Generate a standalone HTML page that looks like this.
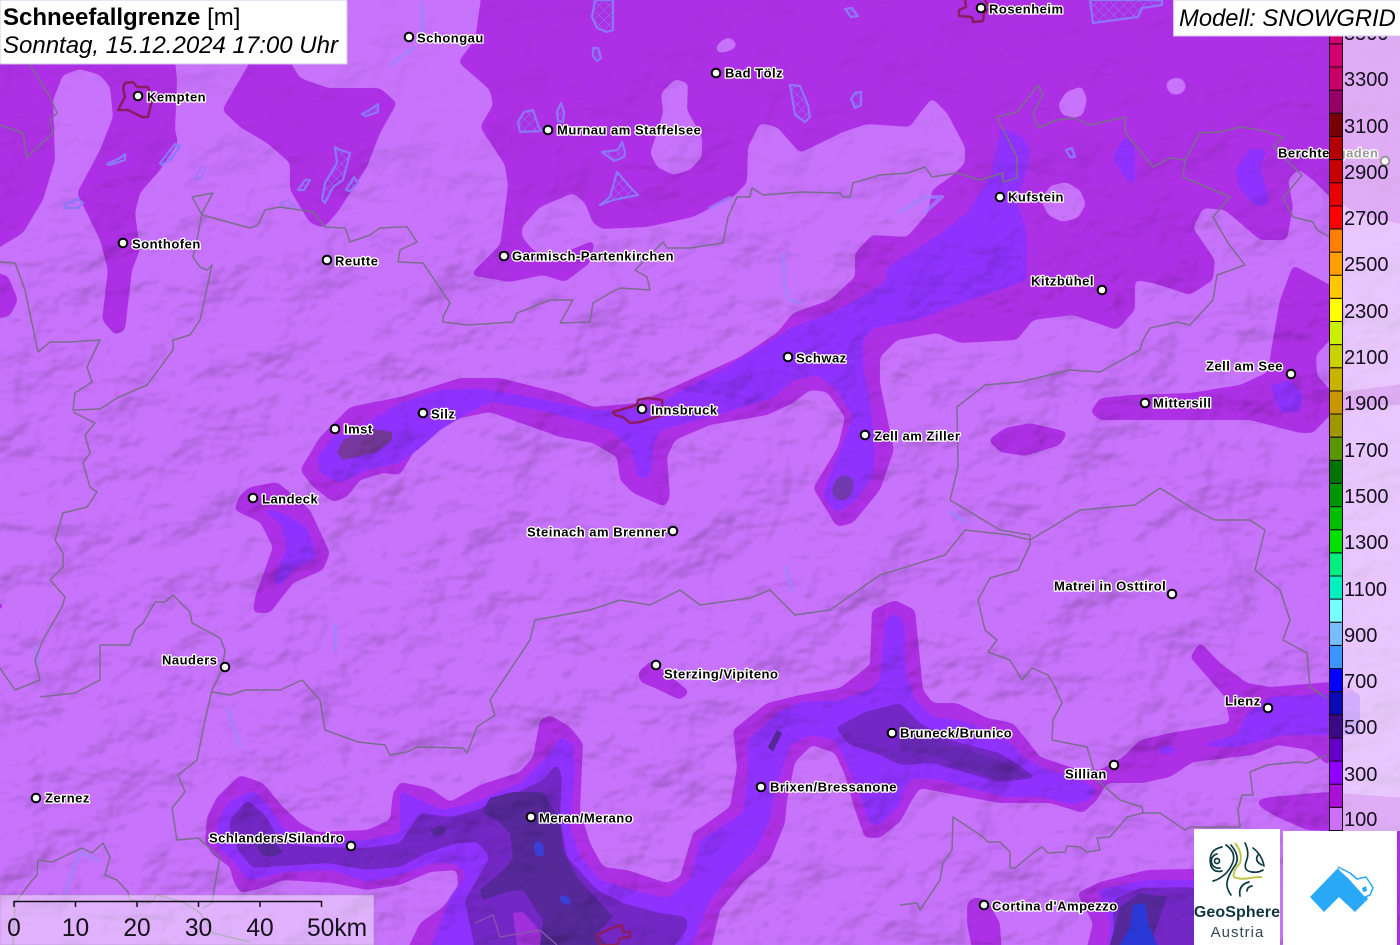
<!DOCTYPE html>
<html><head><meta charset="utf-8"><title>Schneefallgrenze</title>
<style>
html,body{margin:0;padding:0;background:#c56ffa}
#w{position:relative;width:1400px;height:945px;overflow:hidden;font-family:"Liberation Sans",sans-serif}
svg{position:absolute;left:0;top:0}
.c text{font:bold 13px "Liberation Sans",sans-serif;letter-spacing:.5px;fill:#000;stroke:#fff;stroke-width:2.6px;paint-order:stroke;stroke-linejoin:round;dominant-baseline:central}
.c circle{fill:#fff;stroke:#000;stroke-width:2}
.b{fill:none;stroke:#7a6e8c;stroke-width:1.5;stroke-linejoin:round}
.l{stroke:#8c78f6;stroke-width:2.2;fill:url(#h);stroke-linejoin:round}
.r{fill:none;stroke:#a082fc;stroke-width:4;stroke-linecap:round;stroke-linejoin:round;opacity:.75}
.k{fill:none;stroke:#8a1c62;stroke-width:2.5;stroke-linejoin:round}
.g text{font:20px "Liberation Sans",sans-serif;fill:#14101c;dominant-baseline:central}
</style></head><body><div id="w">
<svg width="1400" height="945" viewBox="0 0 1400 945">
<defs>
<pattern id="h" width="7" height="7" patternUnits="userSpaceOnUse" patternTransform="rotate(45)"><path d="M0 0H7M0 0V7" stroke="#8c78f6" stroke-width="1" fill="none"/></pattern>
<filter id="hs" x="0" y="0" width="100%" height="100%" color-interpolation-filters="sRGB">
<feTurbulence type="fractalNoise" baseFrequency=".013 .018" numOctaves="4" seed="11"/>
<feDiffuseLighting surfaceScale="11" diffuseConstant="1.2" lighting-color="#fff"><feDistantLight azimuth="225" elevation="58"/></feDiffuseLighting>
<feGaussianBlur stdDeviation=".8"/>
<feComponentTransfer><feFuncR type="linear" slope=".34" intercept=".66"/><feFuncG type="linear" slope=".34" intercept=".66"/><feFuncB type="linear" slope=".34" intercept=".66"/></feComponentTransfer>
</filter>
<filter id="rnd" filterUnits="userSpaceOnUse" x="-20" y="-20" width="1440" height="985" color-interpolation-filters="sRGB">
<feGaussianBlur stdDeviation="3"/>
<feComponentTransfer><feFuncA type="linear" slope="12" intercept="-5.5"/></feComponentTransfer>
</filter>
<linearGradient id="mg" x1="0" y1="0" x2="0" y2="1"><stop offset="0" stop-color="#fff" stop-opacity=".25"/><stop offset=".14" stop-color="#fff" stop-opacity=".45"/><stop offset=".32" stop-color="#fff" stop-opacity="1"/><stop offset="1" stop-color="#fff" stop-opacity="1"/></linearGradient>
<mask id="m" maskUnits="userSpaceOnUse" x="0" y="0" width="1400" height="945"><rect width="1400" height="945" fill="url(#mg)"/></mask>
</defs>
<rect width="1400" height="945" fill="#c873fc"/>

<!-- magenta band -->
<g fill="#ae30e6" fill-rule="evenodd" filter="url(#rnd)">
<path d="M485 -30L475 40 458 62 490 90 493 105 480 127 505 165 508 185 503 225 500 245 470 275 510 282 543 275 565 282 590 263 595 240 570 250 550 258 533 250 522 237 522 227 540 207 573 193 585 203 593 223 602 229 647 227 693 217 733 197 747 183 748 147 760 123 777 127 800 153 843 132 867 124 910 127 920 113 932 98 947 113 965 147 965 163 953 175 932 190 928 213 907 237 872 235 855 253 855 277 830 300 793 313 777 333 740 357 660 393 637 403 593 407 560 393 500 378 460 378 400 397 350 407 320 437 300 470 313 487 333 502 347 497 360 480 383 473 400 475 415 450 450 420 490 412 560 437 593 443 617 457 620 480 633 493 665 507 670 497 667 457 675 440 710 425 767 415 793 403 810 390 827 392 845 417 838 447 813 488 837 527 853 523 880 490 894 450 880 383 880 357 897 340 937 333 960 343 1017 340 1033 320 1073 315 1117 330 1135 310 1135 280 1153 283 1190 295 1213 280 1215 260 1193 228 1203 208 1225 210 1260 240 1287 240 1293 207 1288 180 1298 169 1313 180 1330 197 1360 215 1430 230 1430 -30Z
M715 48L722 40 730 37 738 45 730 51 718 53Z
M675 79L688 83 687 110 702 137 702 157 690 170 673 175 657 167 650 153 657 133 663 113 661 93Z
M1058 105L1066 92 1082 86 1087 100 1083 115 1075 118 1062 115Z
M1165 84L1172 78 1182 78 1187 87 1180 95 1170 94Z
M1041 200L1050 186 1066 182 1080 190 1086 204 1078 218 1062 222 1048 215Z"/>
<path d="M-30 40H173L177 80 175 130 178 143 160 170 140 193 135 213 140 250 132 270 125 330 115 335 102 320 108 270 100 240 77 193 100 150 113 117 110 87 100 75 80 69 63 75 53 100 55 160 43 200 23 233 -30 265Z"/>
<path d="M-30 265L8 276 18 300 10 316 -30 325Z"/>
<path d="M-30 590L7 606 -30 622Z"/>
<path d="M222 110L257 50 283 50 300 78 328 88 380 88 397 103 380 133 367 167 337 213 323 228 310 223 290 190 290 163 267 143 240 127Z"/>
<path d="M234 510L240 495 250 487 277 482 287 490 310 510 330 553 323 570 293 583 270 613 253 613 255 597 273 547 260 522Z"/>
<path d="M1330 285L1293 265 1280 300 1272 345 1268 372 1240 385 1190 393 1130 395 1100 398 1090 412 1100 420 1180 420 1250 420 1300 433 1313 433 1330 415 1380 405 1430 405 1430 380 1345 392 1330 390 1317 375 1316 355 1330 340 1345 325 1343 297Z"/>
<path d="M988 440L1005 428 1030 423 1068 432 1060 445 1025 456 1000 452Z"/>
<path d="M638 672L652 660 665 672 690 692 680 700 655 688 640 682Z"/>
<path d="M240 775L263 783 283 807 300 823 317 832 367 830 390 820 393 793 400 782 430 788 450 802 480 785 520 772 533 757 540 720 550 715 570 727 583 743 580 810 590 843 603 867 627 870 667 883 680 877 693 833 730 807 737 767 733 730 767 703 800 695 840 688 870 665 872 610 895 600 915 610 918 640 923 690 933 703 957 703 987 718 1013 723 1027 740 1040 757 1073 768 1100 770 1123 757 1140 740 1170 733 1230 723 1225 697 1190 657 1200 642 1220 663 1247 683 1270 687 1330 682 1355 690 1358 705 1345 730 1330 745 1330 767 1310 750 1277 745 1253 755 1193 762 1170 777 1143 783 1107 783 1097 800 1083 813 1050 803 1000 803 967 797 920 788 912 800 900 822 880 838 865 838 855 810 845 775 835 753 812 745 795 762 787 800 785 823 770 860 745 880 720 910 705 975 395 975 420 923 443 907 458 887 457 870 430 872 400 885 367 890 333 883 283 880 263 888 240 893 233 880 230 867 213 855 205 843 207 817 217 797Z"/>
<path d="M1257 800L1270 797 1327 792 1430 800 1430 835 1307 830 1277 817 1260 807Z"/>
<path d="M967 903L975 897 987 900 1000 923 1003 975 977 975 967 923Z"/>
<path d="M1077 893L1100 882 1147 870 1230 868V975H1080L1093 923Z"/>
<path d="M1385 820H1430V975H1385Z"/>
</g>

<!-- violet band -->
<g fill="#9032ff" filter="url(#rnd)">
<path d="M1000 127L1023 137 1030 150 1027 170 1017 200 1027 233 1027 280 1000 290 950 307 917 320 873 328 863 340 863 367 870 400 875 450 873 477 853 503 837 513 823 497 827 483 843 443 853 417 837 390 817 375 793 380 773 398 727 412 660 430 653 447 652 467 647 480 638 477 630 447 610 430 577 420 540 410 490 402 470 412 440 430 420 448 400 463 367 470 340 483 320 473 317 457 333 437 367 423 400 403 440 390 480 388 520 395 560 403 593 410 613 410 653 407 677 393 727 367 767 343 793 327 833 312 857 300 887 280 887 267 927 243 967 213 990 177 998 143Z"/>
<path d="M257 507L283 513 307 527 317 557 293 570 280 587 273 580 287 547 280 523Z"/>
<path d="M1250 148L1267 150 1260 167 1270 203 1257 207 1240 190 1235 170Z"/>
<path d="M1113 157L1125 135 1135 147 1135 180 1130 185 1120 170Z"/>
<path d="M1270 385L1290 380 1303 395 1300 412 1280 412Z"/>
<ellipse cx="1167" cy="750" rx="9" ry="5"/>
<path d="M253 790L270 807 283 828 317 840 367 840 400 833 400 790 420 800 443 810 473 803 520 783 547 757 560 737 573 743 575 773 570 827 580 857 600 880 633 890 667 898 690 880 700 840 743 813 748 777 748 740 777 713 800 702 840 700 870 690 880 680 885 620 897 612 905 625 905 670 915 700 933 717 960 720 987 730 1010 742 1023 757 1043 768 1080 780 1097 788 1090 800 1073 805 1043 797 1007 797 967 788 943 780 913 778 905 788 900 805 880 825 870 825 858 790 845 760 835 740 810 735 790 745 775 790 770 820 755 850 735 870 710 900 680 975 420 975 450 897 467 873 453 863 433 863 400 875 367 882 333 870 283 872 263 878 247 880 233 860 217 847 217 823 227 803Z"/>
<path d="M1247 713L1270 697 1360 692 1360 735 1283 735 1237 747 1207 747 1205 743 1237 735Z"/>
<path d="M1097 890L1145 880 1230 880V975H1108L1110 920Z"/>
</g>

<!-- darker bands -->
<g fill="#7328c6" filter="url(#rnd)">
<path d="M230 820L247 800 267 817 280 843 317 847 367 848 400 843 420 813 450 817 477 810 507 797 543 780 557 763 562 777 560 817 567 857 597 890 623 903 660 913 687 917 687 930 650 975 480 975 465 900 490 857 477 842 457 843 427 853 400 867 367 870 327 863 253 868 240 853 230 833Z"/>
<path d="M835 728L865 712 900 703 920 723 950 740 1000 753 1038 778 997 782 933 763 900 765 880 755 850 745Z"/>
<path d="M1113 900L1140 888 1187 887 1230 893V975H1115Z"/>
</g>
<path d="M513 913L523 912 537 927 547 945 517 945Z" fill="#a030dc"/>
<g fill="#56289a">
<path d="M482 812L490 798 513 792 543 792 560 820 563 850 577 877 613 917 597 933 607 945 540 945 543 920 523 890 507 892 483 900 480 890 507 867 513 857 510 833 497 820Z"/>
<path d="M1120 907L1140 893 1167 897 1160 917 1150 945 1110 945Z"/>
<path d="M430 829L440 826 447 829 444 834 434 836Z"/>
<path d="M768 747L777 730 782 733 773 752Z"/>
<path d="M257 847L263 838 273 841 283 852 273 857 262 855Z"/>
<path d="M900 720L950 745 1000 760 1030 776 997 780 933 755 900 750Z" opacity=".45"/>
</g>
<path d="M337 453L343 440 367 428 392 432 392 440 377 452 343 460Z" fill="#77399e"/>
<ellipse cx="843" cy="488" rx="10" ry="13" transform="rotate(25 843 488)" fill="#723ab0"/>
<ellipse cx="539" cy="849" rx="5" ry="8" transform="rotate(-15 539 849)" fill="#3a3fd8"/>
<ellipse cx="565" cy="900" rx="6" ry="4" transform="rotate(35 565 900)" fill="#3a3fd8"/>
<path d="M1133 905L1145 903 1148 923 1157 945H1120L1130 927Z" fill="#2a38d8"/>

<!-- hillshade -->
<g mask="url(#m)" style="mix-blend-mode:multiply"><rect width="1400" height="945" filter="url(#hs)"/></g>

<!-- rivers and lakes -->
<path class="r" d="M422 3V32M413 48L400 58 392 64M783 255L785 290 790 300 800 303M335 625V650M228 710L240 745M786 568L792 590M950 512L966 522M80 852L65 893M80 852L98 860M900 212L925 197 942 197 925 212M710 208L730 198M35 648L38 665"/>
<g>
<path class="l" d="M595 0H613V30L607 32 597 28 592 17Z"/>
<path class="l" d="M593 48L598 48 601 58 597 61 593 56Z"/>
<path class="l" d="M518 122L524 112 533 110 538 125 541 131 520 132Z"/>
<path class="l" d="M561 103L564 112 563 122 558 121 557 112Z"/>
<path class="l" d="M602 152L618 150 622 142 625 152 624 157 614 161Z"/>
<path class="l" d="M600 205L610 197 617 172 630 187 638 195 613 200Z"/>
<path class="l" d="M790 85L800 86 808 105 810 117 805 122 795 115Z"/>
<path class="l" d="M851 99L855 93 861 92 861 105 855 108Z"/>
<path class="l" d="M845 9L852 8 858 16 851 17Z"/>
<path class="l" d="M1090 0H1162V5L1142 8 1138 17 1100 22 1093 23Z"/>
<path class="l" d="M1066 150L1072 148 1075 157 1070 157Z"/>
<path class="l" d="M322 200L325 183 337 163 335 147 340 150 350 153 343 180 333 187 325 203Z"/>
<path class="l" d="M298 190L305 180 310 180 304 190Z"/>
<path class="l" d="M346 190L354 177 358 183 350 191Z"/>
<path class="l" d="M362 114L370 110 378 104 378 112 366 116Z"/>
<path class="l" d="M107 164L120 158 125 154 125 160 110 165Z"/>
<path class="l" d="M160 163L175 144 180 146 172 158 162 165Z"/>
<path class="l" d="M64 205L78 199 83 203 78 208 66 208Z"/>
<path class="l" d="M195 178L202 166 205 170 199 180Z" stroke-opacity=".5"/>
<path class="l" d="M280 203L288 200 295 206 285 209Z" stroke-opacity=".5"/>
</g>

<!-- borders -->
<g class="b">
<path d="M30 65L50 97 57 113 50 120 53 133 27 157 23 133 0 125"/>
<path d="M0 262L15 263 25 290 38 352 50 342 70 342 100 340 87 367 92 382 75 393 73 410 100 409 117 398 147 385 173 350 173 340 190 335 200 320 212 265 207 270 200 267 193 257 197 240 202 213 213 193 192 197 202 215 250 228 258 225 265 210 280 207 313 212 325 227 345 228 350 242 370 235 380 228 400 227 407 227 417 242 400 250 398 262 423 263 450 303 443 317 443 322 467 325 513 322 517 313 550 300 573 300 560 323 590 322 593 303 610 293 620 288 650 290 647 277 635 270 663 242 667 248 690 248 723 243 728 217 737 197 750 197 752 188 763 195 800 192 840 193 843 197 850 197 853 183 880 175 908 173 925 167 932 177 957 173 980 180 1003 173 1003 182 1017 178 1017 157 997 117 1017 112 1038 85 1043 95 1033 113 1038 128 1057 120 1075 118 1090 125 1125 117 1125 132 1153 167 1170 158 1185 160 1183 177 1230 197 1213 217 1228 243 1245 265 1217 275 1213 300 1190 325 1177 322 1150 328 1143 340 1140 350 1100 372 1070 370 1020 382 985 385 957 407 958 467 950 500 975 515 1000 530 1030 535 1030 545 1018 570 990 578 978 600 985 630 997 640 988 652 1010 660 1022 680 1032 668 1048 675 1055 687 1062 703 1053 720 1052 740 1087 747 1097 780 1120 800 1142 807 1143 813 1160 813 1185 830 1190 827 1240 827 1238 810 1242 795 1253 795 1250 772 1267 765 1297 762 1307 763 1327 755"/>
<path d="M1185 160L1200 133 1220 132 1240 127 1260 130 1283 137 1273 147 1302 175 1283 198 1293 217 1313 222 1317 230 1330 237"/>
<path d="M73 412L95 423 85 435 90 453 83 463 90 487 97 492 87 507 63 513 55 540 63 553 63 567 50 580 65 597 62 607 43 640 35 660 40 680 15 690 0 668M40 697L75 693 100 680 100 645 130 645 135 630 143 623 155 602 165 602 173 595 190 612 192 623 220 638 225 650 222 670 212 690 205 720 197 760 178 775 185 792 172 808 177 840 198 838 220 857 217 873 212 903 203 908"/>
<path d="M212 692L230 695 245 690 280 690 302 680 320 700 325 730 358 742 385 745 390 755 407 752 417 747 463 748 467 753 477 727 495 715 490 700 530 640 535 620 590 610 620 600 650 605 680 590 700 605 750 598 770 590 795 615 830 610 880 575 945 555 965 530 1010 535 1030 540 1080 510 1135 505 1160 488 1195 510 1215 520 1250 520 1265 530 1255 570 1280 590 1290 620 1283 640 1307 653 1310 687 1327 698"/>
<path d="M900 905L917 903 920 910 940 880 943 863 952 850 953 817 983 837 988 842 1000 842 1010 852 1010 868 1015 868 1033 853 1042 847 1048 853 1065 852 1067 846 1080 847 1087 852 1100 850 1097 838 1110 837 1127 817 1143 813"/>
<path d="M38 860L52 862 82 848 92 853 103 843 110 857 105 875 117 880 128 892 130 900 150 903 157 895 183 902 200 913 213 933 250 942M38 860L37 875 30 883 15 903 13 945"/>
<path d="M475 923L493 915 500 937 540 930 557 945" stroke="#8a5aa8" stroke-width="1.2"/>
</g>

<!-- city outlines -->
<path class="k" d="M125 83L133 82 137 87 148 87 152 100 148 117 142 117 128 110 118 110 125 97 123 88Z"/>
<path class="k" d="M613 412L637 405 638 400 648 398 662 400 663 415 640 422 630 423 623 417 615 415Z"/>
<path class="k" d="M965 0L966 7 959 10 959 16 972 17 973 22 983 21 984 13 990 8 985 0"/>
<path class="k" d="M597 935L612 928 622 925 623 932 630 932 630 937 620 938 617 945 600 945Z"/>

<!-- cities -->
<g class="c">
<circle cx="409" cy="37" r="4.3"/><text x="417" y="38">Schongau</text>
<circle cx="138" cy="96" r="4.3"/><text x="147" y="97">Kempten</text>
<circle cx="716" cy="73" r="4.3"/><text x="725" y="73">Bad Tölz</text>
<circle cx="548" cy="130" r="4.3"/><text x="557" y="130">Murnau am Staffelsee</text>
<circle cx="981" cy="8" r="4.3"/><text x="989" y="9">Rosenheim</text>
<circle cx="1385" cy="161" r="4.3"/><text x="1278" y="153">Berchtesgaden</text>
<circle cx="123" cy="243" r="4.3"/><text x="132" y="244">Sonthofen</text>
<circle cx="327" cy="260" r="4.3"/><text x="335" y="261">Reutte</text>
<circle cx="504" cy="256" r="4.3"/><text x="512" y="256">Garmisch-Partenkirchen</text>
<circle cx="1000" cy="197" r="4.3"/><text x="1008" y="197">Kufstein</text>
<circle cx="1102" cy="290" r="4.3"/><text x="1031" y="281">Kitzbühel</text>
<circle cx="788" cy="357" r="4.3"/><text x="796" y="358">Schwaz</text>
<circle cx="1291" cy="374" r="4.3"/><text x="1206" y="366">Zell am See</text>
<circle cx="1145" cy="403" r="4.3"/><text x="1153" y="403">Mittersill</text>
<circle cx="642" cy="409" r="4.3"/><text x="651" y="410">Innsbruck</text>
<circle cx="423" cy="413" r="4.3"/><text x="431" y="414">Silz</text>
<circle cx="335" cy="429" r="4.3"/><text x="344" y="429">Imst</text>
<circle cx="865" cy="435" r="4.3"/><text x="874" y="436">Zell am Ziller</text>
<circle cx="253" cy="498" r="4.3"/><text x="262" y="499">Landeck</text>
<circle cx="673" cy="531" r="4.3"/><text x="527" y="532">Steinach am Brenner</text>
<circle cx="1172" cy="594" r="4.3"/><text x="1054" y="586">Matrei in Osttirol</text>
<circle cx="225" cy="667" r="4.3"/><text x="162" y="660">Nauders</text>
<circle cx="656" cy="665" r="4.3"/><text x="664" y="674">Sterzing/Vipiteno</text>
<circle cx="1268" cy="708" r="4.3"/><text x="1225" y="701">Lienz</text>
<circle cx="892" cy="733" r="4.3"/><text x="900" y="733">Bruneck/Brunico</text>
<circle cx="1114" cy="765" r="4.3"/><text x="1065" y="774">Sillian</text>
<circle cx="761" cy="787" r="4.3"/><text x="770" y="787">Brixen/Bressanone</text>
<circle cx="531" cy="817" r="4.3"/><text x="539" y="818">Meran/Merano</text>
<circle cx="36" cy="798" r="4.3"/><text x="45" y="798">Zernez</text>
<circle cx="351" cy="846" r="4.3"/><text x="209" y="838">Schlanders/Silandro</text>
<circle cx="984" cy="905" r="4.3"/><text x="992" y="906">Cortina d'Ampezzo</text>
</g>

<!-- right strip overlay -->
<rect x="1330" y="36" width="70" height="795" fill="#fff" fill-opacity=".6"/>

<!-- legend -->
<g stroke="#1a0a1a" stroke-width="1">
<rect x="1329.5" y="807.4" width="13" height="23.1" fill="#cc70f5"/>
<rect x="1329.5" y="784.2" width="13" height="23.1" fill="#aa10d8"/>
<rect x="1329.5" y="761.1" width="13" height="23.1" fill="#9000ff"/>
<rect x="1329.5" y="737.9" width="13" height="23.1" fill="#6400c8"/>
<rect x="1329.5" y="714.8" width="13" height="23.1" fill="#3c0a82"/>
<rect x="1329.5" y="691.7" width="13" height="23.1" fill="#0a0ab4"/>
<rect x="1329.5" y="668.5" width="13" height="23.1" fill="#0000ff"/>
<rect x="1329.5" y="645.4" width="13" height="23.1" fill="#3c96ff"/>
<rect x="1329.5" y="622.3" width="13" height="23.1" fill="#78beff"/>
<rect x="1329.5" y="599.1" width="13" height="23.1" fill="#78ffff"/>
<rect x="1329.5" y="576" width="13" height="23.1" fill="#00f0c0"/>
<rect x="1329.5" y="552.9" width="13" height="23.1" fill="#00f080"/>
<rect x="1329.5" y="529.7" width="13" height="23.1" fill="#00e100"/>
<rect x="1329.5" y="506.6" width="13" height="23.1" fill="#00be00"/>
<rect x="1329.5" y="483.5" width="13" height="23.1" fill="#009600"/>
<rect x="1329.5" y="460.3" width="13" height="23.1" fill="#007300"/>
<rect x="1329.5" y="437.2" width="13" height="23.1" fill="#5a9600"/>
<rect x="1329.5" y="414" width="13" height="23.1" fill="#a09600"/>
<rect x="1329.5" y="390.9" width="13" height="23.1" fill="#c89600"/>
<rect x="1329.5" y="367.8" width="13" height="23.1" fill="#c8b400"/>
<rect x="1329.5" y="344.6" width="13" height="23.1" fill="#c8d200"/>
<rect x="1329.5" y="321.5" width="13" height="23.1" fill="#c8f000"/>
<rect x="1329.5" y="298.4" width="13" height="23.1" fill="#ffff00"/>
<rect x="1329.5" y="275.2" width="13" height="23.1" fill="#ffc800"/>
<rect x="1329.5" y="252.1" width="13" height="23.1" fill="#ffa000"/>
<rect x="1329.5" y="229" width="13" height="23.1" fill="#ff8000"/>
<rect x="1329.5" y="205.8" width="13" height="23.1" fill="#ff0000"/>
<rect x="1329.5" y="182.7" width="13" height="23.1" fill="#e60000"/>
<rect x="1329.5" y="159.6" width="13" height="23.1" fill="#c80000"/>
<rect x="1329.5" y="136.4" width="13" height="23.1" fill="#b40000"/>
<rect x="1329.5" y="113.3" width="13" height="23.1" fill="#780000"/>
<rect x="1329.5" y="90.1" width="13" height="23.1" fill="#960064"/>
<rect x="1329.5" y="67" width="13" height="23.1" fill="#c80064"/>
<rect x="1329.5" y="43.9" width="13" height="23.1" fill="#d2006e"/>
<rect x="1329.5" y="20.7" width="13" height="23.1" fill="#d2006e"/>
</g>
<g class="g">
<text x="1344" y="34">3500</text>
<text x="1344" y="80">3300</text>
<text x="1344" y="127">3100</text>
<text x="1344" y="173">2900</text>
<text x="1344" y="219">2700</text>
<text x="1344" y="265">2500</text>
<text x="1344" y="312">2300</text>
<text x="1344" y="358">2100</text>
<text x="1344" y="404">1900</text>
<text x="1344" y="451">1700</text>
<text x="1344" y="497">1500</text>
<text x="1344" y="543">1300</text>
<text x="1344" y="590">1100</text>
<text x="1344" y="636">900</text>
<text x="1344" y="682">700</text>
<text x="1344" y="728">500</text>
<text x="1344" y="775">300</text>
<text x="1344" y="820">100</text>
</g>

<!-- header boxes -->
<rect x="0" y="0" width="347" height="64" fill="#fff" stroke="#d8c0e8" stroke-width="1"/>
<text x="3" y="25" font-family="Liberation Sans" font-size="24" font-weight="bold" fill="#000">Schneefallgrenze <tspan font-weight="normal">[m]</tspan></text>
<text x="3" y="53" font-family="Liberation Sans" font-size="24" font-style="italic" fill="#000">Sonntag, 15.12.2024 17:00 Uhr</text>
<rect x="1173.5" y="0" width="227" height="36" fill="#fff" stroke="#d8c0e8" stroke-width="1"/>
<text x="1179" y="26" font-family="Liberation Sans" font-size="23.8" font-style="italic" fill="#000">Modell: SNOWGRID</text>

<!-- scale -->
<rect x="0" y="895" width="374" height="50" fill="#fff" fill-opacity=".45" stroke="#a080b0" stroke-opacity=".4"/>
<path d="M14 907V901.5H321.5V907M75.5 901.5V907M137 901.5V907M198.5 901.5V907M260 901.5V907" fill="none" stroke="#15101c" stroke-width="1.5"/>
<g font-family="Liberation Sans" font-size="24.6" fill="#15101c">
<text x="14" y="936" text-anchor="middle">0</text>
<text x="75.5" y="936" text-anchor="middle">10</text>
<text x="137" y="936" text-anchor="middle">20</text>
<text x="198.5" y="936" text-anchor="middle">30</text>
<text x="260" y="936" text-anchor="middle">40</text>
<text x="307" y="936">50km</text>
</g>

<!-- logos -->
<rect x="1194" y="829" width="86" height="116" fill="#fff"/>
<rect x="1283" y="831" width="114" height="114" fill="#fff"/>
<g fill="none" stroke="#0f3a43" stroke-width="1.7" stroke-linecap="round">
<circle cx="1217" cy="861" r="2.5"/>
<path d="M1217 854A7 7 0 1 0 1220 868"/>
<path d="M1222 847Q1207 850 1211 866 1214 873 1222 871"/>
<path d="M1226 845Q1236 852 1233 862 1230 870 1224 875 1218 880 1213 881"/>
<path d="M1231 845Q1240 856 1236 864 1226 878 1227 886 1228 891 1231 895"/>
<path d="M1245 843Q1250 853 1246 862 1243 871 1252 872 1258 873 1263 870"/>
<path d="M1253 848Q1262 855 1264 866"/>
<path d="M1258 855Q1254 861 1262 865"/>
<path d="M1240 896Q1238 885 1249 882"/>
<path d="M1247 891Q1247 887 1252 886"/>
</g>
<path d="M1235 843Q1243 853 1240 863 1232 872 1234 877 1240 880 1250 878 1258 877 1262 877" fill="none" stroke="#bcc64a" stroke-width="2"/>
<text x="1237" y="917" text-anchor="middle" font-family="Liberation Sans" font-size="16" font-weight="bold" letter-spacing=".1" fill="#12363f">GeoSphere</text>
<text x="1237.5" y="937" text-anchor="middle" font-family="Liberation Sans" font-size="15" letter-spacing="1" fill="#2d4a52">Austria</text>
<path d="M1310 897L1338 868 1340 871 1364 892 1368 899 1355 912 1339 897 1324 912Z" fill="#2aa8f8"/>
<path d="M1338 867L1350 873 1357 879 1366 877 1370 883 1373 888 1370 895 1365 897" fill="#fff" stroke="#2aa8f8" stroke-width="1.5" stroke-linejoin="round"/>
<path d="M1362 888L1366 886 1367 891 1363 892Z" fill="#2aa8f8"/>
</svg>
</div></body></html>
